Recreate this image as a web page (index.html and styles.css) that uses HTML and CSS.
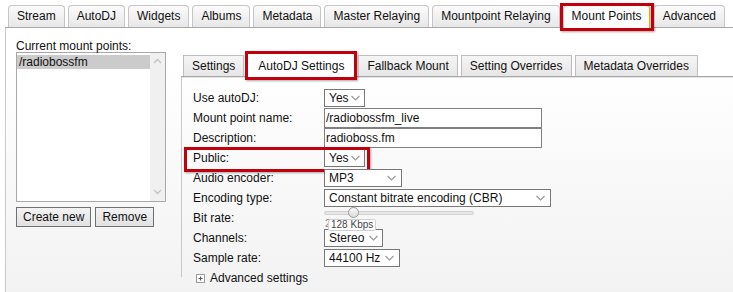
FILE: index.html
```html
<!DOCTYPE html>
<html>
<head>
<meta charset="utf-8">
<link rel="stylesheet" href="styles.css">
</head>
<body>
<div class="app">
  <nav class="tabs">
    <span class="tab">Stream</span>
    <span class="tab">AutoDJ</span>
    <span class="tab">Widgets</span>
    <span class="tab">Albums</span>
    <span class="tab">Metadata</span>
    <span class="tab">Master Relaying</span>
    <span class="tab">Mountpoint Relaying</span>
    <span class="tab active hl">Mount Points</span>
    <span class="tab">Advanced</span>
  </nav>
  <div class="panel">
    <aside class="mounts">
      <div class="mounts-label">Current mount points:</div>
      <div class="listbox">
        <div class="list">
          <div class="item selected">/radiobossfm</div>
        </div>
        <div class="scroll">
          <svg class="caret" width="9" height="6" viewBox="0 0 9 6"><polyline points="1,5 4.5,1.5 8,5" fill="none" stroke="#c4c4c4" stroke-width="1.3"/></svg>
          <svg class="caret" width="9" height="6" viewBox="0 0 9 6"><polyline points="1,1 4.5,4.5 8,1" fill="none" stroke="#c4c4c4" stroke-width="1.3"/></svg>
        </div>
      </div>
      <div class="btns">
        <button class="btn">Create new</button>
        <button class="btn">Remove</button>
      </div>
    </aside>
    <section class="editor">
      <div class="subtabs">
        <span class="subtab">Settings</span>
        <span class="subtab active hl">AutoDJ Settings</span>
        <span class="subtab">Fallback Mount</span>
        <span class="subtab">Setting Overrides</span>
        <span class="subtab">Metadata Overrides</span>
      </div>
      <div class="subpanel">
        <div class="row"><span class="lbl">Use autoDJ:</span><span class="select s-yes"><span>Yes</span><svg class="chev" width="9" height="6" viewBox="0 0 9 6"><polyline points="0.5,1 4.5,5 8.5,1" fill="none" stroke="#9a9a9a" stroke-width="1.2"/></svg></span></div>
        <div class="row"><span class="lbl">Mount point name:</span><span class="input">/radiobossfm_live</span></div>
        <div class="row"><span class="lbl">Description:</span><span class="input">radioboss.fm</span></div>
        <div class="row public"><span class="lbl">Public:</span><span class="select s-yes"><span>Yes</span><svg class="chev" width="9" height="6" viewBox="0 0 9 6"><polyline points="0.5,1 4.5,5 8.5,1" fill="none" stroke="#9a9a9a" stroke-width="1.2"/></svg></span></div>
        <div class="row"><span class="lbl">Audio encoder:</span><span class="select s-mp3"><span>MP3</span><svg class="chev" width="9" height="6" viewBox="0 0 9 6"><polyline points="0.5,1 4.5,5 8.5,1" fill="none" stroke="#9a9a9a" stroke-width="1.2"/></svg></span></div>
        <div class="row"><span class="lbl">Encoding type:</span><span class="select s-enc"><span>Constant bitrate encoding (CBR)</span><svg class="chev" width="9" height="6" viewBox="0 0 9 6"><polyline points="0.5,1 4.5,5 8.5,1" fill="none" stroke="#9a9a9a" stroke-width="1.2"/></svg></span></div>
        <div class="row bitrate"><span class="lbl">Bit rate:</span>
          <span class="slider">
            <span class="track"></span>
            <span class="thumb"></span>
            <span class="min">2</span>
            <span class="tip">128 Kbps</span>
          </span>
        </div>
        <div class="row"><span class="lbl">Channels:</span><span class="select s-ch"><span>Stereo</span><svg class="chev" width="9" height="6" viewBox="0 0 9 6"><polyline points="0.5,1 4.5,5 8.5,1" fill="none" stroke="#9a9a9a" stroke-width="1.2"/></svg></span></div>
        <div class="row"><span class="lbl">Sample rate:</span><span class="select s-sr"><span>44100 Hz</span><svg class="chev" width="9" height="6" viewBox="0 0 9 6"><polyline points="0.5,1 4.5,5 8.5,1" fill="none" stroke="#9a9a9a" stroke-width="1.2"/></svg></span></div>
        <div class="row adv"><span class="plus"><svg width="9" height="9" viewBox="0 0 9 9"><rect x="0.5" y="0.5" width="8" height="8" fill="#fff" stroke="#9c9c9c"/><path d="M2.5 4.5h4M4.5 2.5v4" stroke="#555" stroke-width="1"/></svg></span><span>Advanced settings</span></div>
      </div>
    </section>
  </div>
</div>
</body>
</html>
```

FILE: styles.css
```css
*, *::before, *::after { box-sizing: border-box; }
html, body { margin: 0; height: 100%; }
body {
  font: 12px "Liberation Sans", Arial, sans-serif;
  color: #111;
  background: #fff;
  overflow: hidden;
}
.app { margin-left: 5px; padding-top: 5px; }

/* top tabs */
.tabs {
  display: flex;
  align-items: flex-end;
  gap: 3px;
  padding-left: 3px;
  height: 23px;
  border-bottom: 1px solid #a9a9a9;
}
.tab {
  position: relative;
  height: 22px;
  line-height: 21px;
  padding: 0 8px;
  border: 1px solid #c6c6c6;
  border-bottom: 0;
  border-radius: 4px 4px 0 0;
  background: linear-gradient(#fbfbfb, #e7e7e7);
  white-space: nowrap;
}
.tab.active {
  height: 23px;
  margin-bottom: -1px;
  background: #fcfcfc;
  box-shadow: inset -1px 0 0 #f0a800;
}
.hl::after {
  content: "";
  position: absolute;
  left: -4px; right: -4px; top: -3px; bottom: -3px;
  border: 3px solid #c0000a;
  box-shadow: 1px 1px 2px rgba(0,0,0,.35);
  pointer-events: none;
}

/* main panel */
.panel {
  display: flex;
  height: 270px;
  border-left: 1px solid #c9c9c9;
  background: linear-gradient(#fff 15%, #f2f2f2 100%);
}
.mounts { width: 150px; margin-left: 10px; padding-top: 12px; flex: none; }
.mounts-label { line-height: 12px; height: 12px; }
.listbox {
  display: flex;
  height: 150px;
  border: 1px solid #a8a8a8;
  background: #fff;
}
.list { flex: 1; padding-top: 2px; }
.item { height: 14px; line-height: 14px; padding-left: 2px; }
.item.selected { background: #cbcbcb; }
.scroll {
  width: 15px;
  background: #f0f0f0;
  display: flex;
  flex-direction: column;
  justify-content: space-between;
  align-items: center;
  padding: 5px 0 6px;
}
.btns { display: flex; gap: 4px; margin-top: 5px; }
.btn {
  height: 20px;
  padding: 0 6px;
  border: 1px solid #707070;
  border-radius: 0;
  background: linear-gradient(#f3f3f3, #e1e1e1);
  font: inherit;
  color: #111;
}

/* editor */
.editor { flex: 1; margin-left: 15px; padding-top: 27px; }
.subtabs {
  display: flex;
  align-items: flex-end;
  gap: 3px;
  padding-left: 2px;
  height: 22px;
  border-bottom: 1px solid #a8a8a8;
}
.subtab {
  position: relative;
  height: 21px;
  line-height: 20px;
  padding: 0 8px;
  border: 1px solid #bdbdbd;
  border-bottom: 0;
  background: linear-gradient(#f5f5f5, #e6e6e6);
  white-space: nowrap;
}
.subtab.active {
  height: 24px;
  line-height: 24px;
  margin-bottom: -1px;
  padding: 0 10px;
  background: #fff;
}
.subtab.hl::after { left: -3px; right: -3px; top: -3px; bottom: -3px; }
.subpanel {
  height: 200px;
  border-left: 1px solid #c8c8c8;
  box-shadow: inset 0 1px 0 #e2e2e2;
  padding: 11px 0 0 11px;
}
.row {
  position: relative;
  display: flex;
  align-items: center;
  height: 20px;
}
.lbl { width: 131px; flex: none; }
.select {
  display: inline-flex;
  align-items: center;
  justify-content: space-between;
  height: 18px;
  padding: 0 5px 0 4px;
  border: 1px solid #777;
  background: #fff;
}
.chev { flex: none; margin-left: 2px; }
.s-yes { width: 41px; }
.s-mp3 { width: 78px; }
.s-enc { width: 227px; }
.s-ch { width: 59px; padding-right: 4px; }
.s-sr { width: 76px; }
.input {
  width: 218px;
  height: 20px;
  line-height: 18px;
  padding-left: 1px;
  border: 1px solid #808080;
  background: #fff;
}
.public::after {
  content: "";
  position: absolute;
  left: -9px; top: -1px;
  width: 186px; height: 25px;
  border: 3px solid #c0000a;
  box-shadow: 1px 1px 2px rgba(0,0,0,.35);
}
.bitrate { z-index: 2; }
.slider { position: relative; width: 150px; height: 20px; align-self: flex-start; }
.track {
  position: absolute;
  left: 0; right: 0; top: 3px;
  height: 4px;
  border: 1px solid #d2d2d2;
  border-radius: 2px;
  background: #e6e6e6;
}
.thumb {
  position: absolute;
  left: 24px; top: -1px;
  width: 11px; height: 11px;
  border: 1px solid #9a9a9a;
  border-radius: 50%;
  background: linear-gradient(#f8f8f8, #dcdcdc);
}
.min {
  position: absolute;
  left: 1px; top: 10px;
  font-size: 11px;
  line-height: 11px;
  color: #888;
}
.tip {
  position: absolute;
  left: 4px; top: 11px;
  height: 12px;
  padding: 0 2px;
  line-height: 10px;
  font-size: 10px;
  color: #444;
  background: #fff;
  border: 1px solid #d0d0d0;
  border-radius: 2px;
  white-space: nowrap;
}
.adv { padding-left: 3px; }
.plus { display: inline-flex; margin-right: 5px; }
```
